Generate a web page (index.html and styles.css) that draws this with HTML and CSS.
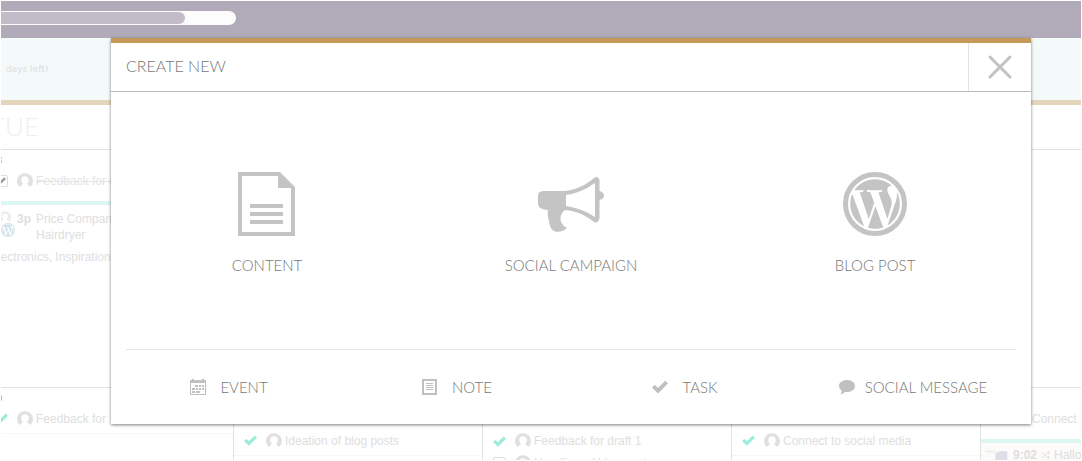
FILE: index.html
```html
<!DOCTYPE html>
<html lang="en">
<head>
<meta charset="utf-8">
<title>Create new</title>
<link rel="stylesheet" href="styles.css">
</head>
<body>
<svg class="defs" aria-hidden="true">
  <symbol id="tick" viewBox="0 0 16 16"><path d="M0 8.5 2.800 5.700 6 9 13.200 1.800 16 4.600 6 14.500Z"/></symbol>
  <symbol id="avatar" viewBox="0 0 16 16"><path d="M2.500 14A8 8 0 1 1 13.500 14L11 12Q10 11.500 10.400 10.500Q11.800 9 11.800 7A3.800 3.800 0 0 0 4.200 7Q4.200 9 5.600 10.500Q6 11.500 5 12Z"/></symbol>
  <symbol id="wp" viewBox="0 0 64 64"><circle cx="32" cy="32" r="29.500" fill="none" stroke="currentColor" stroke-width="5"/><path transform="translate(4.400 4.400) scale(2.300)" d="M21.469 6.825c.84 1.537 1.318 3.3 1.318 5.175 0 3.979-2.156 7.456-5.363 9.325l3.295-9.527c.615-1.54.82-2.771.82-3.864 0-.405-.026-.78-.07-1.11m-7.981.105c.647-.03 1.232-.105 1.232-.105.582-.075.514-.93-.067-.899 0 0-1.755.135-2.88.135-1.064 0-2.85-.15-2.85-.15-.585-.03-.661.855-.075.885 0 0 .54.061 1.125.09l1.68 4.605-2.37 7.08L5.354 6.9c.649-.03 1.234-.1 1.234-.1.585-.075.516-.93-.065-.896 0 0-1.746.138-2.874.138-.2 0-.438-.008-.69-.015C4.911 3.15 8.235 1.215 12 1.215c2.809 0 5.365 1.072 7.286 2.833-.046-.003-.091-.009-.141-.009-1.06 0-1.812.923-1.812 1.914 0 .89.513 1.643 1.06 2.531.411.72.89 1.643.89 2.977 0 .915-.354 1.994-.821 3.479l-1.075 3.585-3.9-11.61zM12 22.784c-1.059 0-2.081-.153-3.048-.437l3.237-9.406 3.315 9.087c.024.053.05.101.078.149-1.12.393-2.325.609-3.582.609M1.211 12c0-1.564.336-3.05.935-4.39L7.29 21.709C3.694 19.96 1.212 16.271 1.211 12"/></symbol>
</svg>

<div class="page">
  <header class="topbar"><div class="progress"><div class="progress-fill"></div></div></header>
  <div class="trial">days left)</div>
  <div class="day-head">TUE</div>
  <div class="week week-first">
    <section class="day">
      <div class="date">18</div>
      <div class="task done"><span class="box"><svg><use href="#tick"/></svg></span><svg class="avatar"><use href="#avatar"/></svg><s>Feedback for draft</s></div>
      <div class="event">
        <div class="event-icons"><svg class="avatar"><use href="#avatar"/></svg><svg class="wp-mini"><use href="#wp"/></svg></div>
        <b class="time">3p</b>
        <div class="event-title">Price Comparison<br>Hairdryer</div>
      </div>
      <div class="tags">Electronics, Inspiration</div>
    </section>
  </div>
  <div class="week">
    <section class="day">
      <div class="date">20</div>
      <div class="task"><svg class="tick"><use href="#tick"/></svg><svg class="avatar"><use href="#avatar"/></svg>Feedback for</div>
    </section>
    <section class="day">
      <div class="date"></div>
      <div class="task"></div>
      <div class="task"><svg class="tick"><use href="#tick"/></svg><svg class="avatar"><use href="#avatar"/></svg>Ideation of blog posts</div>
    </section>
    <section class="day">
      <div class="date"></div>
      <div class="task"></div>
      <div class="task"><svg class="tick"><use href="#tick"/></svg><svg class="avatar"><use href="#avatar"/></svg>Feedback for draft 1</div>
      <div class="task"><span class="box"></span><svg class="avatar"><use href="#avatar"/></svg>Headline of blog post</div>
    </section>
    <section class="day">
      <div class="date"></div>
      <div class="task"></div>
      <div class="task"><svg class="tick"><use href="#tick"/></svg><svg class="avatar"><use href="#avatar"/></svg>Connect to social media</div>
    </section>
    <section class="day">
      <div class="date"></div>
      <div class="task plain">Connect</div>
      <div class="event late">
        <svg class="pic" viewBox="0 0 28 16"><path d="M0 3H12V5H0Z" fill="#f0ece8"/><path d="M12 6Q18 2 26 4V16H12Z" fill="#dfdde8"/></svg>
        <b class="time">9:02</b>
        <svg class="shuffle" viewBox="0 0 10 10"><path d="M0 2H2L7 8H10M0 8H2L7 2H10M8 0 10 2 8 4M8 6 10 8 8 10"/></svg>
        <div class="event-title">Halloween</div>
      </div>
    </section>
  </div>
</div>

<div class="modal" role="dialog" aria-labelledby="modal-title">
  <header class="modal-head">
    <h1 id="modal-title">CREATE NEW</h1>
    <button class="close" aria-label="Close"><svg viewBox="0 0 26 26"><path d="M3 3 23 23M23 3 3 23"/></svg></button>
  </header>
  <div class="tiles">
    <button class="tile">
      <svg viewBox="0 0 64 64"><path fill-rule="evenodd" d="M3 0H45L60 15V64H3ZM7 4V60H56V16H43V4Z"/><path d="M15 32H48V36H15ZM15 40H48V44H15ZM15 48H48V52H15Z"/></svg>
      CONTENT
    </button>
    <button class="tile">
      <svg viewBox="1 0 64 64"><path fill-rule="evenodd" d="M6 19H26C38 18 48 13 56 6Q60 3 61.500 8V19Q66 20 66 23.500Q66 27 61.500 28V46Q60 52 56 50C46 42 38 39 27 38Q21 43 23 50Q25 54 29 56Q23 61 17 59.500Q12 58 11 49Q9 42 10 38Q0 38 0 31V24Q0 19 6 19ZM28 23V34Q43 36 57 45V11Q43 21 28 23Z"/></svg>
      SOCIAL CAMPAIGN
    </button>
    <button class="tile">
      <svg><use href="#wp"/></svg>
      BLOG POST
    </button>
  </div>
  <hr class="rule">
  <div class="links">
    <button class="link"><svg viewBox="0 0 16 16"><path fill-rule="evenodd" d="M0 1H2V0H4V1H12V0H14V1H16V16H0ZM1 4V15H15V4Z"/><path d="M5 6H8V8H5ZM9 6H11V8H9ZM12 6H14V8H12ZM2 9H5V11H2ZM6 9H8V11H6ZM9 9H11V11H9ZM12 9H14V11H12ZM2 12H5V14H2ZM6 12H10V14H6Z"/></svg>EVENT</button>
    <button class="link"><svg viewBox="0 0 16 16"><path fill-rule="evenodd" d="M0 0H15V16H0ZM2 2V14H13V2Z"/><path d="M4 4H11V5H4ZM4 6H11V7H4ZM4 8H11V9H4ZM4 10H11V11H4Z"/></svg>NOTE</button>
    <button class="link"><svg><use href="#tick"/></svg>TASK</button>
    <button class="link social"><svg viewBox="0 0 16 16"><path d="M8 1C12.500 1 16 3.500 16 7S12.500 13 8 13Q7 13 6 12.800Q4 15.300 1 15.500Q3 14 2.800 11.600Q0 10 0 7C0 3.500 3.500 1 8 1Z"/></svg>SOCIAL MESSAGE</button>
  </div>
</div>
</body>
</html>
```
FILE: styles.css
```css
* { box-sizing: border-box; }
html { height: 100%; }
body {
  height: 100%;
  margin: 0;
  border: 1px solid #fff;
  overflow: hidden;
  position: relative;
  background: #fff;
  font-family: "Liberation Sans", Arial, sans-serif;
  font-size: 12px;
  color: #dedede;
}
svg { display: block; fill: currentColor; overflow: visible; flex: none; }
.defs { position: absolute; width: 0; height: 0; }
button {
  border: 0;
  margin: 0;
  padding: 0;
  background: none;
  font: inherit;
  color: inherit;
  cursor: pointer;
}

/* Calendar behind the dialog */
.page { height: 100%; overflow: hidden; }
.topbar { height: 37px; padding-top: 10px; background: #b1abb9; }
.progress {
  width: 235px;
  height: 14px;
  padding: 1px 0;
  background: #fcfcfc;
  border-radius: 0 7px 7px 0;
}
.progress-fill { width: 184px; height: 12px; background: #c2bcc8; border-radius: 0 6px 6px 0; }
.trial {
  height: 67px;
  padding-left: 5px;
  border-bottom: 5px solid #e4d4bc;
  background: #f4f9fa;
  font: 9px/62px "DejaVu Sans", sans-serif;
  color: #dcdfe0;
}
.day-head {
  height: 45px;
  margin-left: -11px;
  border-bottom: 1px solid #e2e2e2;
  font: 300 26px/42px Lato, sans-serif;
  color: #efefef;
}
.week {
  display: grid;
  grid-template-columns: repeat(5, 249px);
  margin-left: -16px;
  height: 260px;
}
.week-first { height: 238px; border-bottom: 1px solid #e2e2e2; }
.week-first .day { border: 0; }
.day { border-right: 1px solid #e2e2e2; }
.date { height: 20px; padding-left: 5px; line-height: 20px; font-size: 11px; color: #999; }
.task {
  display: flex;
  align-items: center;
  height: 22px;
  padding-left: 10px;
  white-space: nowrap;
}
.task:last-child { height: 26px; padding-bottom: 4px; border-bottom: 1px dotted #eee; }
.task .avatar { margin: 0 3px 0 9px; }
.plain { padding-left: 51px; }
.tick { width: 13px; height: 13px; color: #9cecdc; }
.avatar { width: 16px; height: 16px; color: #e0e0e0; }
.box { width: 13px; height: 12px; border: 1px solid #ddd; border-radius: 2px; color: #999; }
.box svg { width: 10px; height: 10px; }
.done { color: #e4e4e4; }
.event {
  display: flex;
  margin-top: 9px;
  padding-top: 6px;
  border-top: 4px solid #dcf6f1;
  line-height: 16px;
}
.event-icons { width: 32px; padding-left: 12px; }
.event-icons .avatar { height: 12px; color: #ececec; }
.wp-mini { width: 14px; height: 14px; margin-left: 4px; color: #cfe0e8; }
.time { width: 19px; }
.tags { padding: 6px 0 0 5px; line-height: 16px; }
.late { align-items: center; gap: 4px; padding-top: 4px; background: #fdfbfa; }
.late .time { width: auto; }
.pic { width: 24px; height: 16px; margin-left: 4px; }
.shuffle { width: 9px; height: 8px; fill: none; stroke: #dadada; }

/* Dialog */
.modal {
  position: absolute;
  top: 37px;
  left: 110px;
  right: 50px;
  background: #fff;
  border-top: 5px solid #c49a58;
  box-shadow: 0 1px 3px rgba(0, 0, 0, 0.5);
  font-family: Lato, sans-serif;
  font-size: 15px;
  font-weight: 300;
  color: #777;
}
.modal-head {
  display: flex;
  justify-content: space-between;
  height: 49px;
  padding-left: 15px;
  border-bottom: 1px solid #bbb;
}
h1 { margin: 0; font: inherit; font-size: 16px; line-height: 46px; }
.close { display: grid; place-items: center; width: 63px; border-left: 1px solid #e4e4e4; color: #c2c2c2; }
.close svg { width: 26px; height: 26px; fill: none; stroke: currentColor; stroke-width: 3; stroke-linecap: round; }
.tiles { display: grid; grid-template-columns: repeat(3, 1fr); padding: 80px 4px 74px; }
.tile {
  display: flex;
  flex-direction: column;
  align-items: center;
  gap: 19px;
  line-height: 20px;
}
.tile svg { width: 64px; height: 64px; color: #c4c4c4; }
.rule { margin: 0 15px; border: 0; border-top: 1px solid #e6e6e6; }
.links {
  display: grid;
  grid-template-columns: repeat(4, 1fr);
  height: 74px;
  padding: 0 4px;
}
.link { display: flex; align-items: center; justify-content: center; gap: 14px; white-space: nowrap; }
.link svg { width: 16px; height: 16px; color: #c0c0c0; }
.social { gap: 10px; }
```
